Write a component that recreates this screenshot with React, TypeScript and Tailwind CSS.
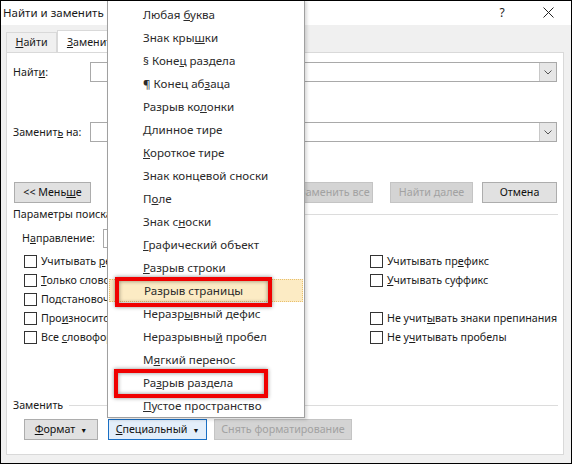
import React from "react";

const font = { fontFamily: '"Noto Sans", "Open Sans", sans-serif' };

function Check({ children }: { children: React.ReactNode }) {
  return (
    <div className="flex h-[19px] items-center gap-[4px]">
      <span className="h-[13px] w-[13px] border border-[#333] bg-white" />
      <span className="whitespace-nowrap">{children}</span>
    </div>
  );
}

function Combo({ width }: { width: string }) {
  return (
    <div className={`flex h-[20px] items-stretch border border-[#a9a9a9] bg-white ${width}`}>
      <div className="flex-1" />
      <div className="flex w-[17px] items-center justify-center border-l border-[#c8c8c8] bg-[#e6e6e6]">
        <svg width="8" height="5" viewBox="0 0 8 5">
          <path d="M0.5 0.5 L4 4 L7.5 0.5" fill="none" stroke="#555" strokeWidth="1" />
        </svg>
      </div>
    </div>
  );
}

function Btn({
  children,
  width,
  disabled,
  active,
}: {
  children: React.ReactNode;
  width: string;
  disabled?: boolean;
  active?: boolean;
}) {
  const look = disabled
    ? "border-[#c4c4c4] bg-[#d4d4d4] text-[#a2a2a2]"
    : active
      ? "border-[#1a6fc4] bg-[#e3eefa] text-[#111]"
      : "border-[#adadad] bg-[#e1e1e1] text-[#111]";
  return (
    <div className={`flex h-[21px] items-center justify-center border whitespace-nowrap ${look} ${width}`}>
      <span>{children}</span>
    </div>
  );
}

const Caret = () => <span className="ml-[5px] text-[7px] align-middle">▼</span>;

const menuItems: React.ReactNode[] = [
  <>Любая <u>б</u>уква</>,
  <>Знак кры<u>ш</u>ки</>,
  <>§ Коне<u>ц</u> раздела</>,
  <>¶ Конец аб<u>з</u>аца</>,
  <>Разрыв ко<u>л</u>онки</>,
  <><u>Д</u>линное тире</>,
  <><u>К</u>ороткое тире</>,
  <>Знак концевой сноски</>,
  <>П<u>о</u>ле</>,
  <>Знак с<u>н</u>оски</>,
  <><u>Г</u>рафический объект</>,
  <><u>Р</u>азрыв строки</>,
  <>Разрыв страницы</>,
  <>Неразр<u>ы</u>вный дефис</>,
  <>Неразрывны<u>й</u> пробел</>,
  <>М<u>я</u>гкий перенос</>,
  <>Ра<u>з</u>рыв раздела</>,
  <><u>П</u>устое пространство</>,
];

export default function App() {
  return (
    <div
      style={font}
      className="relative flex h-[464px] w-[572px] flex-col overflow-hidden border border-black bg-[#f0f0f0] text-[10.7px] leading-none text-[#1a1a1a]"
    >
      {/* title bar */}
      <div className="flex h-[24px] items-center justify-between bg-white pb-[1px] pl-[2px]">
        <span className="text-[11.5px]">Найти и заменить</span>
        <div className="flex items-center">
          <span className="w-[46px] text-center text-[12px]">?</span>
          <div className="flex w-[46px] items-center justify-center">
            <svg width="11" height="11" viewBox="0 0 11 11">
              <path d="M0.5 0.5 L10.5 10.5 M10.5 0.5 L0.5 10.5" stroke="#222" strokeWidth="1" />
            </svg>
          </div>
        </div>
      </div>

      {/* tabs */}
      <div className="ml-[5px] mt-[5px] flex items-end">
        <div className="flex h-[20px] w-[51px] items-center justify-center border border-b-0 border-[#d9d9d9] bg-[#f0f0f0]">
          <span>
            <u>Н</u>айти
          </span>
        </div>
        <div className="-mb-px flex h-[23px] w-[70px] items-center justify-center border border-b-0 border-[#d9d9d9] bg-white">
          <span>
            <u>З</u>аменить
          </span>
        </div>
      </div>

      {/* panel */}
      <div className="ml-[5px] flex h-[403px] w-[558px] flex-col border border-[#d9d9d9] bg-white pl-[6px]">
        <div className="mt-[9px] flex items-center">
          <span className="w-[77px]">
            Найт<u>и</u>:
          </span>
          <Combo width="w-[467px]" />
        </div>
        <div className="mt-[40px] flex items-center">
          <span className="w-[77px]">
            Заменит<u>ь</u> на:
          </span>
          <Combo width="w-[467px]" />
        </div>

        <div className="mt-[40px] flex items-center">
          <div className="ml-[1px]">
            <Btn width="w-[77px]">
              &lt;&lt; Мень<u>ш</u>е
            </Btn>
          </div>
          <div className="ml-[205px]">
            <Btn width="w-[77px]" disabled>
              Заменить все
            </Btn>
          </div>
          <div className="ml-[17px]">
            <Btn width="w-[83px]" disabled>
              Найти далее
            </Btn>
          </div>
          <div className="ml-[9px]">
            <Btn width="w-[75px]">Отмена</Btn>
          </div>
        </div>

        <div className="mt-[3px] flex h-[16px] items-center">
          <span className="whitespace-nowrap">Параметры поиска</span>
          <div className="ml-[6px] mr-[5px] h-px flex-1 bg-[#dcdcdc]" />
        </div>

        <div className="ml-[9px] mt-[7px] flex h-[19px] items-center">
          <span className="w-[81px]">
            Н<u>а</u>правление:
          </span>
          <div className="h-[19px] w-[100px] border border-[#a9a9a9] bg-white" />
        </div>

        <div className="ml-[11px] mt-[4px] grid grid-cols-[346px_1fr]">
          <div>
            <Check>
              Учитывать <u>р</u>егистр
            </Check>
            <Check>
              <u>Т</u>олько слово целиком
            </Check>
            <Check>Подстановочные знаки</Check>
            <Check>
              Про<u>и</u>зносится как
            </Check>
            <Check>
              Все <u>с</u>ловоформы
            </Check>
          </div>
          <div>
            <Check>
              Учитывать пр<u>е</u>фикс
            </Check>
            <Check>
              <u>У</u>читывать суффикс
            </Check>
            <div className="h-[19px]" />
            <Check>
              Не учит<u>ы</u>вать знаки препинания
            </Check>
            <Check>
              Не у<u>ч</u>итывать пробелы
            </Check>
          </div>
        </div>

        <div className="mt-[50px] flex h-[16px] items-center">
          <span>Заменить</span>
          <div className="ml-[6px] mr-[5px] h-px flex-1 bg-[#dcdcdc]" />
        </div>

        <div className="ml-[11px] mt-[6px] flex items-center">
          <Btn width="w-[74px]">
            <u>Ф</u>ормат
            <Caret />
          </Btn>
          <div className="ml-[10px]">
            <Btn width="w-[99px]" active>
              <u>С</u>пециальный
              <Caret />
            </Btn>
          </div>
          <div className="ml-[7px]">
            <Btn width="w-[138px]" disabled>
              Снять форматирование
            </Btn>
          </div>
        </div>
      </div>

      {/* dropdown menu */}
      <div className="absolute left-[106px] top-[-2px] w-[198px] border border-[#a0a0a0] bg-white pb-0 pt-[3px] text-[11.6px] text-[#2b2b2b] shadow-[2px_2px_3px_rgba(0,0,0,0.15)]">
        {menuItems.map((item, i) => (
          <div
            key={i}
            className={`mx-[1px] flex h-[23px] items-center pl-[34px] whitespace-nowrap ${
              i === 12 ? "border border-dotted border-[#e8c06e] bg-[#fcebc4] pl-[33px]" : ""
            }`}
          >
            <span>{item}</span>
          </div>
        ))}
      </div>

      {/* callouts */}
      <div className="pointer-events-none absolute left-[114px] top-[276px] h-[30px] w-[157px] border-[4px] border-[#f00000] shadow-[0_0_4px_rgba(0,0,0,0.45),inset_0_0_4px_rgba(0,0,0,0.45)]" />
      <div className="pointer-events-none absolute left-[113px] top-[368px] h-[29px] w-[154px] border-[4px] border-[#f00000] shadow-[0_0_4px_rgba(0,0,0,0.45),inset_0_0_4px_rgba(0,0,0,0.45)]" />
    </div>
  );
}
